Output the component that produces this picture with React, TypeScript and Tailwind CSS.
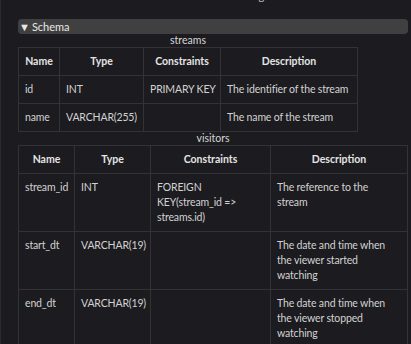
import React from "react";

type Row = { name: string; type: string; constraints: string; description: string };

const streams: Row[] = [
  { name: "id", type: "INT", constraints: "PRIMARY KEY", description: "The identifier of the stream" },
  { name: "name", type: "VARCHAR(255)", constraints: "", description: "The name of the stream" },
];

const visitors: Row[] = [
  {
    name: "stream_id",
    type: "INT",
    constraints: "FOREIGN KEY(stream_id => streams.id)",
    description: "The reference to the stream",
  },
  {
    name: "start_dt",
    type: "VARCHAR(19)",
    constraints: "",
    description: "The date and time when the viewer started watching",
  },
  {
    name: "end_dt",
    type: "VARCHAR(19)",
    constraints: "",
    description: "The date and time when the viewer stopped watching",
  },
];

function SchemaTable({
  caption,
  rows,
  widths,
  wrap,
}: {
  caption: string;
  rows: Row[];
  widths: number[];
  wrap?: boolean;
}) {
  const total = widths.reduce((a, b) => a + b, 0);
  return (
    <table className="table-fixed border-collapse" style={{ width: total }}>
      <caption className="text-[10.5px] leading-[13px] text-[#d6d6d6]">{caption}</caption>
      <colgroup>
        {widths.map((w, i) => (
          <col key={i} style={{ width: w }} />
        ))}
      </colgroup>
      <thead>
        <tr>
          {["Name", "Type", "Constraints", "Description"].map((h) => (
            <th
              key={h}
              className="whitespace-nowrap border border-[#333236] px-[5px] py-1.5 text-center text-[10.5px] font-bold leading-[15px] text-[#e4e4e4]"
            >
              {h}
            </th>
          ))}
        </tr>
      </thead>
      <tbody>
        {rows.map((r) => (
          <tr key={r.name}>
            {[r.name, r.type, r.constraints, r.description].map((c, i) => (
              <td
                key={i}
                className={
                  wrap
                    ? "border border-[#333236] py-1.5 pl-[6px] pr-[14px] align-top text-[10.5px] leading-[15px] tracking-[-0.15px] text-[#d2d2d2]"
                    : "whitespace-nowrap border border-[#333236] py-1.5 pl-[6px] pr-[3px] align-top text-[10.5px] leading-[15px] tracking-[-0.15px] text-[#d2d2d2]"
                }
              >
                {c}
              </td>
            ))}
          </tr>
        ))}
      </tbody>
    </table>
  );
}

export default function App() {
  return (
    <div
      className="h-[344px] w-[411px] overflow-hidden border-l border-[#2c2c2e] bg-[#1c1b1f]"
      style={{ fontFamily: "Lato, 'Liberation Sans', sans-serif" }}
    >
      <p className="-mt-[12px] pl-[30px] text-[11px] leading-[15px] text-[#bdbdbd]">
        • Describe the data to be stored in the following tables:
      </p>
      <div className="pl-[17px] pr-[3px] pt-[16px]">
        <div className="flex h-[15px] items-center rounded-[4px] bg-[#404040] pl-[1px] text-[11px] leading-[15px] text-[#e8e8e8]">
          <span className="mr-[2px] text-[11px] leading-none">▼</span>
          <span>Schema</span>
        </div>
        <div className="flex flex-col">
          <SchemaTable caption="streams" rows={streams} widths={[41, 84, 77, 137]} />
          <SchemaTable caption="visitors" rows={visitors} widths={[56, 76, 120, 137]} wrap />
        </div>
      </div>
    </div>
  );
}
